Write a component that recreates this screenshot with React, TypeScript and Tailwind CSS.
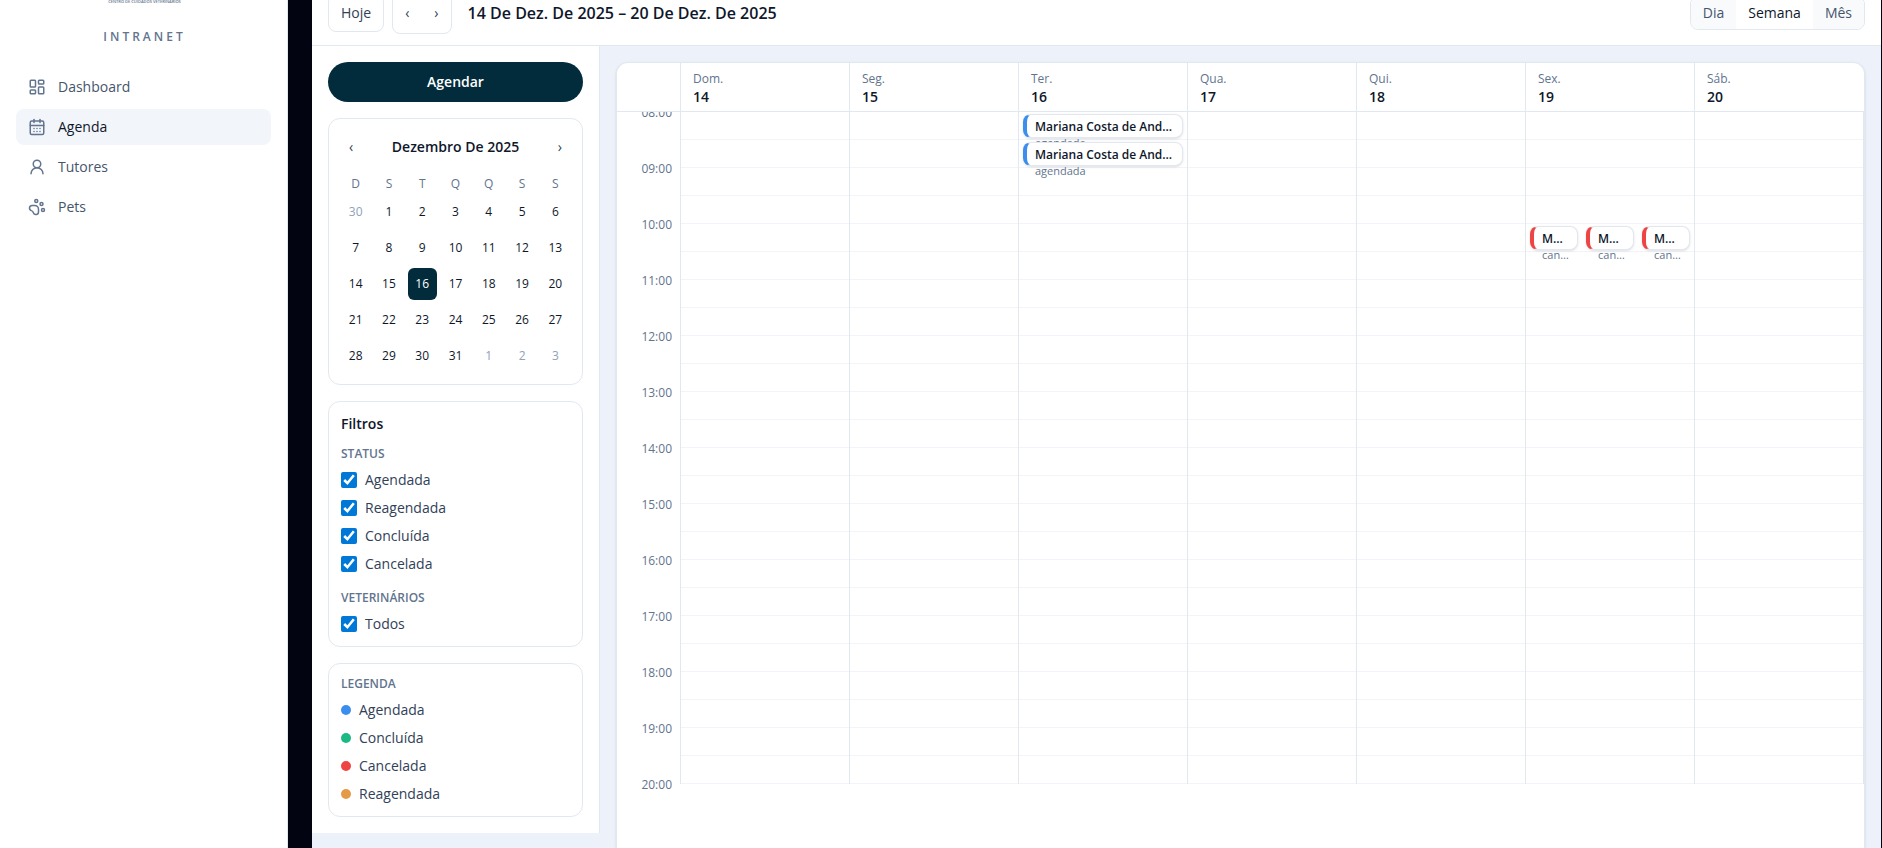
import { useState } from 'react';
import { CalendarDays, LayoutDashboard, PawPrint, UserRound } from 'lucide-react';
import clsx from 'clsx';

const NAV = [
  { label: 'Dashboard', icon: LayoutDashboard },
  { label: 'Agenda', icon: CalendarDays, active: true },
  { label: 'Tutores', icon: UserRound },
  { label: 'Pets', icon: PawPrint },
];

const WEEK = [
  { name: 'Dom.', day: 14 },
  { name: 'Seg.', day: 15 },
  { name: 'Ter.', day: 16 },
  { name: 'Qua.', day: 17 },
  { name: 'Qui.', day: 18 },
  { name: 'Sex.', day: 19 },
  { name: 'Sáb.', day: 20 },
];

const STATUSES = ['Agendada', 'Reagendada', 'Concluída', 'Cancelada'];

const LEGEND = [
  { label: 'Agendada', dot: 'bg-[#3b8eed]' },
  { label: 'Concluída', dot: 'bg-[#1bb984]' },
  { label: 'Cancelada', dot: 'bg-[#ef4444]' },
  { label: 'Reagendada', dot: 'bg-[#e59a47]' },
];

type Appointment = { slot: number; lane: number; lanes: number; name: string; status: 'agendada' | 'cancelada' };

// keyed by day of month, slot = half hours after 08:00
const APPOINTMENTS: Record<number, Appointment[]> = {
  16: [
    { slot: 0, lane: 0, lanes: 1, name: 'Mariana Costa de Andrade', status: 'agendada' },
    { slot: 1, lane: 0, lanes: 1, name: 'Mariana Costa de Andrade', status: 'agendada' },
  ],
  19: [
    { slot: 4, lane: 0, lanes: 3, name: 'Mariana Costa', status: 'cancelada' },
    { slot: 4, lane: 1, lanes: 3, name: 'Mariana Costa', status: 'cancelada' },
    { slot: 4, lane: 2, lanes: 3, name: 'Mariana Costa', status: 'cancelada' },
  ],
};

const SLOT_HEIGHT = 28;
const HOURS = Array.from({ length: 13 }, (_, i) => `${String(i + 8).padStart(2, '0')}:00`);
const SLOTS = Array.from({ length: 24 }, (_, i) => i);

// 5 weeks starting on Nov 30
const MONTH_DAYS = Array.from({ length: 35 }, (_, i) => {
  if (i === 0) return { day: 30, outside: true };
  return i > 31 ? { day: i - 31, outside: true } : { day: i, outside: false };
});

function Sidebar() {
  return (
    <aside className="flex w-72 shrink-0 flex-col border-r border-slate-200 bg-white">
      <div className="flex flex-col items-center pl-0.5">
        <span className="h-[5px] text-[4px] leading-[4px] font-semibold text-slate-500">CENTRO DE CUIDADOS VETERINÁRIOS</span>
        <span className="mt-6 text-xs font-semibold tracking-[3px] text-slate-500">INTRANET</span>
      </div>
      <nav className="mt-6 flex flex-col gap-1 px-4">
        {NAV.map(({ label, icon: Icon, active }) => (
          <a
            key={label}
            href="#"
            className={clsx('flex h-9 items-center gap-3 rounded-lg px-3 text-sm', active ? 'bg-[#f2f5fa] text-slate-900' : 'text-slate-600')}
          >
            <Icon size={18} className="text-slate-500" />
            {label}
          </a>
        ))}
      </nav>
    </aside>
  );
}

function Toolbar() {
  const [view, setView] = useState('Semana');

  return (
    <header className="-mt-5 flex h-[66px] items-center border-b border-slate-200 bg-white px-4">
      <button className="h-[38px] rounded-lg border border-slate-200 px-3 text-sm text-slate-700">Hoje</button>
      <div className="ml-2 flex h-[42px] items-center gap-px rounded-lg border border-slate-200 text-sm text-slate-700">
        <button aria-label="Anterior" className="h-full px-3">‹</button>
        <button aria-label="Próximo" className="h-full px-3">›</button>
      </div>
      <h1 className="ml-4 text-base font-semibold text-slate-900">14 De Dez. De 2025 – 20 De Dez. De 2025</h1>
      <div className="ml-auto flex h-[34px] overflow-hidden rounded-lg border border-slate-200 text-sm">
        {['Dia', 'Semana', 'Mês'].map(v => (
          <button
            key={v}
            onClick={() => setView(v)}
            className={clsx('px-3', v === view ? 'bg-white text-slate-900' : 'bg-slate-50 text-slate-600')}
          >
            {v}
          </button>
        ))}
      </div>
    </header>
  );
}

function MiniCalendar() {
  return (
    <section className="rounded-xl border border-slate-200 p-3">
      <div className="mb-[13px] flex h-8 items-center justify-between text-sm">
        <button aria-label="Mês anterior" className="px-2 text-slate-700">‹</button>
        <h2 className="font-semibold text-slate-900">Dezembro De 2025</h2>
        <button aria-label="Próximo mês" className="px-2 text-slate-700">›</button>
      </div>
      <div className="grid grid-cols-7 gap-1 text-center text-xs">
        {['D', 'S', 'T', 'Q', 'Q', 'S', 'S'].map((d, i) => (
          <span key={i} className="font-medium text-slate-500">{d}</span>
        ))}
        {MONTH_DAYS.map(({ day, outside }, i) => (
          <button
            key={i}
            className={clsx(
              'h-8 rounded-md',
              outside ? 'text-slate-400' : day === 16 ? 'bg-[#022c3c] text-white' : 'text-slate-900'
            )}
          >
            {day}
          </button>
        ))}
      </div>
    </section>
  );
}

function CheckItem({ label }: { label: string }) {
  return (
    <label className="flex items-center gap-2 text-sm text-slate-700">
      <input type="checkbox" defaultChecked className="size-4 accent-[#0078d7]" />
      {label}
    </label>
  );
}

function Filters() {
  return (
    <section className="rounded-xl border border-slate-200 p-3">
      <h2 className="text-sm font-semibold text-slate-900">Filtros</h2>
      <h3 className="mt-3 text-xs font-semibold text-slate-500">STATUS</h3>
      <div className="mt-2 flex flex-col gap-2">
        {STATUSES.map(s => <CheckItem key={s} label={s} />)}
      </div>
      <h3 className="mt-4 mb-2 text-xs font-semibold text-slate-500">VETERINÁRIOS</h3>
      <CheckItem label="Todos" />
    </section>
  );
}

function Legend() {
  return (
    <section className="rounded-xl border border-slate-200 p-3">
      <h2 className="text-xs font-semibold text-slate-500">LEGENDA</h2>
      <ul className="mt-2 flex flex-col gap-2 text-sm text-slate-700">
        {LEGEND.map(({ label, dot }) => (
          <li key={label} className="flex items-center gap-2">
            <span className={clsx('size-2.5 rounded-full', dot)} />
            {label}
          </li>
        ))}
      </ul>
    </section>
  );
}

function AppointmentCard({ appt }: { appt: Appointment }) {
  return (
    <div
      className="absolute px-1 py-0.5"
      style={{
        top: appt.slot * SLOT_HEIGHT,
        height: SLOT_HEIGHT,
        left: `${(appt.lane * 100) / appt.lanes}%`,
        width: `${100 / appt.lanes}%`,
      }}
    >
      <button
        className={clsx(
          'block h-6 w-full rounded-lg border border-l-4 border-slate-200 bg-white px-2 text-left shadow-sm',
          appt.status === 'agendada' ? 'border-l-[#3b8eed]' : 'border-l-[#ef4444]'
        )}
      >
        <span className="block h-6 pt-1">
          <span className="block truncate text-xs font-semibold text-slate-900">{appt.name}</span>
          <span className="block truncate text-[11px] leading-4 text-slate-500">{appt.status}</span>
        </span>
      </button>
    </div>
  );
}

function WeekGrid() {
  return (
    <section className="flex flex-1 flex-col overflow-hidden rounded-t-xl border border-b-0 border-slate-200 bg-white shadow-sm">
      <div className="flex border-b border-slate-200">
        <div className="w-16 shrink-0 border-r border-slate-200" />
        <div className="grid flex-1 grid-cols-7">
          {WEEK.map(({ name, day }) => (
            <div key={day} className="border-r border-slate-200 px-3 pt-2 pb-1 last:border-r-0">
              <div className="text-xs text-slate-500">{name}</div>
              <div className="text-sm font-semibold text-slate-900">{day}</div>
            </div>
          ))}
        </div>
      </div>

      <div className="flex flex-1 items-start overflow-hidden">
        <div className="h-[672px] w-16 shrink-0 border-r border-slate-200 pr-2 text-right text-xs text-slate-500">
          <div className="-mt-[7px]">
            {HOURS.map(h => <div key={h} className="h-14">{h}</div>)}
          </div>
        </div>
        <div className="grid flex-1 grid-cols-7">
          {WEEK.map(({ day }) => (
            <div key={day} className="relative border-r border-slate-200">
              {SLOTS.map(s => <div key={s} className="h-7 border-b border-slate-100" />)}
              {(APPOINTMENTS[day] ?? []).map((a, i) => <AppointmentCard key={i} appt={a} />)}
            </div>
          ))}
        </div>
      </div>
    </section>
  );
}

export default function App() {
  return (
    <div className="flex h-screen overflow-hidden bg-[#020412] font-['Open_Sans','Noto_Sans',sans-serif]">
      <Sidebar />
      <div className="mr-px ml-6 flex min-w-0 flex-1 flex-col bg-[#edf2fa]">
        <Toolbar />
        <div className="flex min-h-0 flex-1">
          <aside className="flex w-72 shrink-0 flex-col gap-4 self-start border-r border-slate-200 bg-white p-4">
            <button className="h-10 rounded-full bg-[#022c3c] text-sm font-semibold text-white">Agendar</button>
            <MiniCalendar />
            <Filters />
            <Legend />
          </aside>
          <main className="flex min-w-0 flex-1 px-4 pt-4">
            <WeekGrid />
          </main>
        </div>
      </div>
    </div>
  );
}
